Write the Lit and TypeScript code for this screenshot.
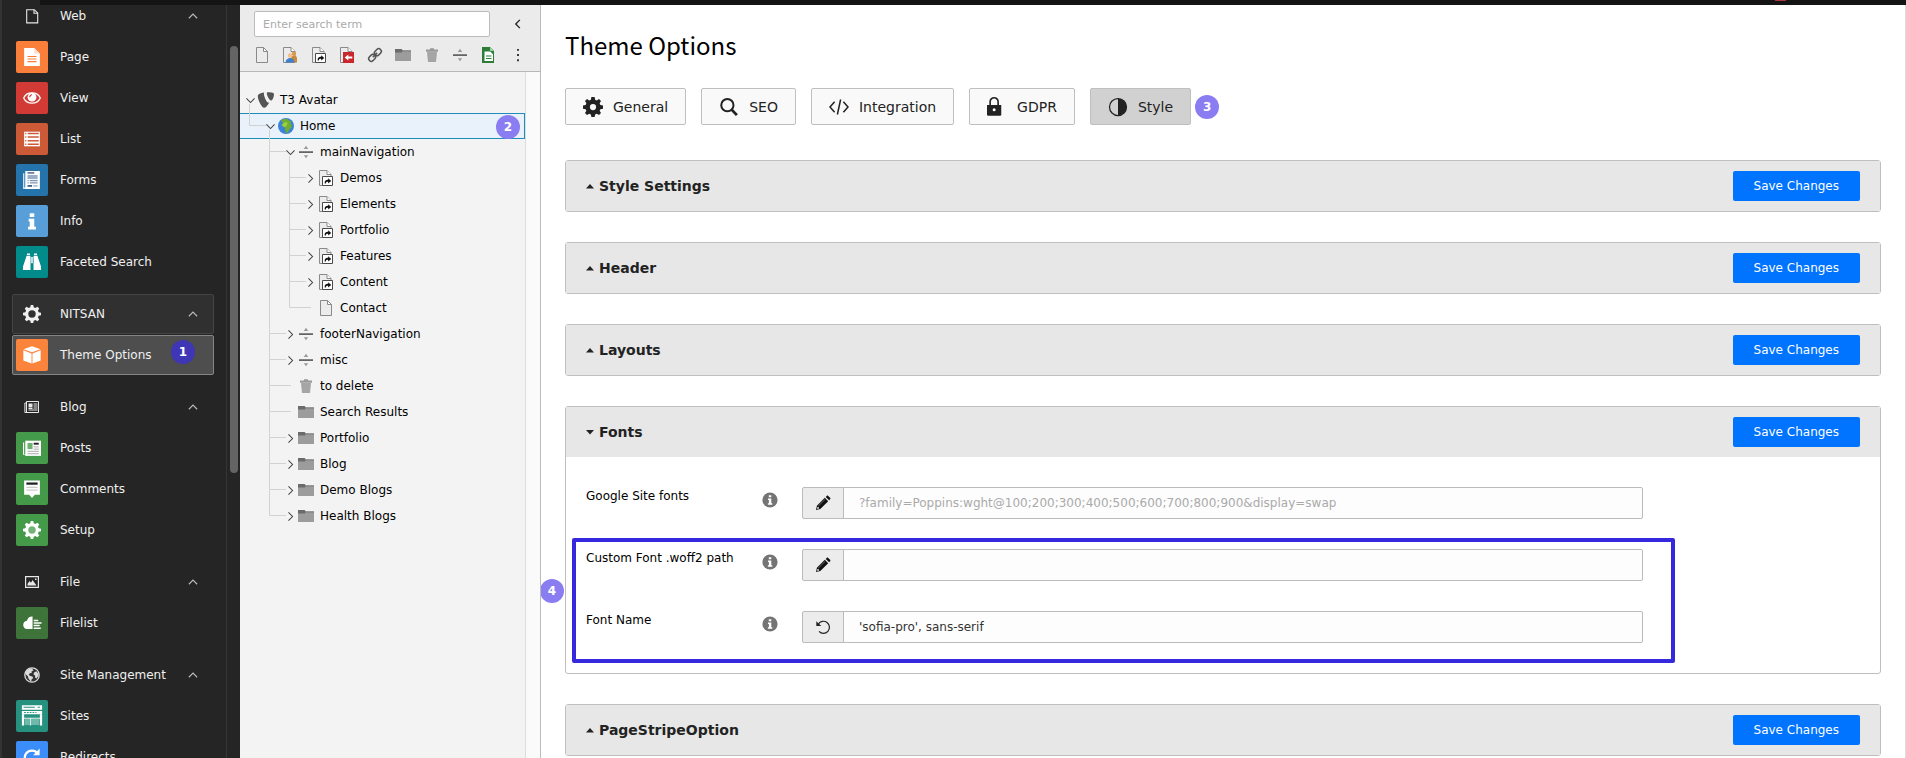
import { LitElement, html, svg, css, nothing } from "lit";
import { customElement, property } from "lit/decorators.js";
import { classMap } from "lit/directives/class-map.js";

/* ---------- icon shapes, all on a 16 x 16 grid ---------- */
const shapes: Record<string, unknown> = {
  // module menu, group heads
  webPage: svg`<path d="M2.700 1.700h7.600l3.400 3.400v9.800H2.700z" fill="none" stroke="#e8e8e8" stroke-width="1.100"/><path d="M10 1.700v3.600h3.700" fill="none" stroke="#e8e8e8" stroke-width="1.100"/>`,
  gear: svg`<path fill="currentColor" fill-rule="evenodd" d="M6.900 0h2.200l.4 2.100 1.500.6L12.800 1.600l1.600 1.600L13.300 5l.6 1.500 2.100.4v2.200l-2.100.4-.6 1.500 1.100 1.800-1.600 1.600-1.800-1.100-1.500.6L9.100 16H6.900l-.4-2.100-1.500-.6-1.800 1.100-1.600-1.600L2.700 11l-.6-1.500L0 9.100V6.900l2.100-.4L2.700 5 1.600 3.200l1.600-1.600L5 2.700l1.500-.6zM8 4.700a3.300 3.300 0 1 0 0 6.600 3.300 3.300 0 0 0 0-6.600z"/>`,
  gearSolid: svg`<path fill="currentColor" fill-rule="evenodd" d="M6.700 0h2.600l.4 2.100 1.300.6L12.800 1.600l1.600 1.600L13.300 5l.6 1.300 2.100.4v2.600l-2.100.4-.6 1.300 1.100 1.800-1.600 1.600-1.800-1.100-1.300.6L9.300 16H6.700l-.4-2.100-1.300-.6-1.800 1.100-1.600-1.600L2.700 11l-.6-1.300L0 9.300V6.700l2.100-.4L2.700 5 1.600 3.200l1.600-1.600L5 2.700l1.300-.6zM8 5.500a2.500 2.500 0 1 0 0 5 2.500 2.500 0 0 0 0-5z"/>`,
  gearGreen: svg`<circle cx="8" cy="8" r="4" fill="#74b378"/><path fill="#fff" fill-rule="evenodd" d="M6.900 0h2.200l.4 2.100 1.500.6L12.800 1.600l1.600 1.600L13.300 5l.6 1.500 2.100.4v2.200l-2.100.4-.6 1.500 1.100 1.800-1.600 1.600-1.800-1.100-1.500.6L9.100 16H6.900l-.4-2.100-1.500-.6-1.800 1.100-1.600-1.600L2.700 11l-.6-1.500L0 9.100V6.900l2.100-.4L2.700 5 1.600 3.200l1.600-1.600L5 2.700l1.500-.6zM8 4.700a3.300 3.300 0 1 0 0 6.600 3.300 3.300 0 0 0 0-6.600z"/>`,
  news: svg`<path d="M2.500 2.500h12v11h-12zM2.500 4H.9v9.500h2" fill="none" stroke="#e8e8e8"/><path d="M4.500 4.500h4v4h-4z" fill="#e8e8e8"/><path d="M9.500 5h4M9.500 7h4M9.500 9h4M4.500 11h9M4.500 9.500h4" stroke="#e8e8e8" fill="none"/>`,
  image: svg`<path d="M1.600 2.600h12.800v10.800H1.600z" fill="none" stroke="#e8e8e8" stroke-width="1.200"/><path d="M3.500 11.500V10L5.500 7l1.500 1.800L8.500 6l4 5.500z" fill="#e8e8e8"/><path d="M11 4.500h1.500V6H11z" fill="#e8e8e8"/>`,
  globeMono: svg`<circle cx="8" cy="8" r="7.200" fill="#333" stroke="#dcdcdc" stroke-width="1.300"/><path d="M2 4.500C3.500 2 6 1.200 8 1.500l1.500 1.700-2 1.300.2 1.500-2 .3-1 1.700 1.700 1 2 .6.8 1.500-1.600 1.500L7 15l-2.500-3.500L3.700 9 1.800 7.500zM10 5.500l2.500-1.300 2 2.800-.2 2-1.800 2.500-1.300-.7-.2-2.300-1.500-1z" fill="#dcdcdc"/>`,
  // module menu, entries
  doc: svg`<path d="M1 0h9l5 5v11H1z" fill="#fff"/><path d="M10 0v5h5z" fill="#fde0cf"/><path d="M4 7.500h8M4 9.800h8M4 12.100h8" stroke="#fa7f3b"/>`,
  eye: svg`<path d="M.6 8C2 5 4.800 3.500 8 3.500S14 5 15.400 8C14 11 11.200 12.600 8 12.600S2 11 .6 8z" fill="none" stroke="#fff" stroke-width="1.200"/><circle cx="8" cy="7.300" r="3.900" fill="#fff"/><path d="M6 7.300A2.200 2.200 0 0 1 8 5.100" stroke="#d13a35" fill="none"/>`,
  list: svg`<path d="M1 1.500h14v13H1z" fill="#fff"/><path d="M2 3.100h1M2 6.300h1M2 9.500h1M2 12.700h1M4.200 3.100H14M4.200 6.300H14M4.200 9.500H14M4.200 12.700H14" stroke="#cc5a37" stroke-width="1.300"/>`,
  form: svg`<path d="M0 2h1.200v12.500H3V16H0z" fill="#cfe1f2"/><path d="M2 0h13v16H2z" fill="#fff"/><path d="M4 1.700h6" stroke="#39557c" stroke-width="1.200"/><path d="M4 3.500h9v3.700H4z" fill="#9aaec8"/><path d="M4 8.500h1M6 8.500h7M4 10.500h1M6 10.500h7" stroke="#7d95b5"/><path d="M4 12.500h4V14H4z" fill="#39557c"/><path d="M9 12.500h4V14H9z" fill="#aebfd4"/>`,
  info: svg`<path d="M6 1h4v3.500H6zM5 6h5v7h1.500v2.500h-7V13H6V8.500H5z" fill="#fff"/>`,
  binoculars: svg`<path d="M3.200 2.500h3.300l.5 3.500v9H0v-3zM12.800 2.500H9.500L9 6v9h7v-3zM3.500.5h2.700v1.300H3.500zM9.800.5h2.700v1.300H9.800zM6.700 3.500h2.600V9H6.700z" fill="#fff"/><path d="M7 3.500v11.500M9 3.500v11.500" stroke="#028b8b" stroke-width=".6"/>`,
  cube: svg`<path d="M8 .3 15.500 2.800 8 5.600.5 2.800z" fill="#fff"/><path d="M.3 3.800 7.600 6.600v9L.3 12.800zM15.700 3.800 8.400 6.600v9l7.300-2.800z" fill="#fff"/>`,
  posts: svg`<path d="M0 3h1v10.500h2V14H0z" fill="#fff"/><path d="M2 1.500h14V15H2z" fill="#fff"/><path d="M4 3.500h4.500V9H4z" fill="#6db270"/><path d="M9.500 4.200H14" stroke="#222" stroke-width="1.700"/><path d="M9.500 7H14M9.500 9H14M4 11h10M4 13h10" stroke="#bbb"/>`,
  comment: svg`<path d="M1 .5h14v12.500h-4.500L8 16l-2.500-3H1z" fill="#fff"/><path d="M3 3.200h10" stroke="#222" stroke-width="2"/><path d="M3 6.500h10M3 9h10" stroke="#ccc"/>`,
  cloud: svg`<path d="M8.500 2.200C5.500 2 4 3.800 3.500 6 1.300 6.400 0 8 .2 10c.2 2 1.500 3.300 3.300 3.300h5zM9.500 2.500v10.800h6.300v-1.400H9.500v-1h5.300V9.600H9.500v-.9h7V7.400h-7v-.9h4V5.200h-4z" fill="#fff"/>`,
  site: svg`<path d="M-1-1.500h18v4H-1zM-1 3.500h18v3H-1z" fill="#fff"/><path d="M.5.300h10M13 .3h2" stroke="#26917f" stroke-width=".9"/><path d="M1 4.900h11" stroke="#26917f" stroke-dasharray="1.500 1"/><path d="M-1 6.500H1v10h-2zM15 6.500h2v10h-2zM1 9.500h14v1H1zM6 10.500h1v6H6z" fill="#fff"/><path d="M1.500 10.500H6v5.500H1.500zM7 10.500h7.500v5.500H7z" fill="#6fb8ac"/>`,
  redirect: svg`<path d="M13 4.800A6.300 6.300 0 1 0 14.200 9" fill="none" stroke="#fff" stroke-width="2"/><path d="M14.800.5v6H9z" fill="#fff"/>`,
  // page tree and its toolbar
  page: svg`<path d="M2.500.5h7l4 4v11h-11z" fill="#ececec" stroke="#8a8a8a"/><path d="M9.500.5v4h4z" fill="#fff" stroke="#8a8a8a" stroke-linejoin="round"/>`,
  pageUser: svg`<path d="M1.500.5h7.500l4 4v11H1.500z" fill="#ececec" stroke="#8a8a8a"/><path d="M9 .5v4h4" fill="#fff" stroke="#8a8a8a"/><circle cx="12" cy="6.800" r="2.200" fill="#d99a4e"/><path d="M9 15.500V11c0-3 6-3 6 0v4.500z" fill="#c98a3c"/><circle cx="8" cy="8.500" r="2.200" fill="#f0c08a"/><path d="M3.500 15.500c.3-6 8.700-6 9 0z" fill="#3f7fd0"/>`,
  pageShortcut: svg`<path d="M1.500.5h7.500l4 4v11H1.500z" fill="#ececec" stroke="#8a8a8a"/><path d="M9 .5v4h4" fill="#fff" stroke="#8a8a8a"/><path d="M4.500 6.500h10v9h-10z" fill="#fff" stroke="#4a4a4a"/><path d="M6.700 13.600c-.4-3 1.300-4 3.500-3.800V8.300l3 2.600-3 2.600v-1.600c-1.500-.2-2.500.2-2.300 1.700z" fill="#111"/>`,
  pageMount: svg`<path d="M1.500.5h7.500l4 4v11H1.500z" fill="#ececec" stroke="#8a8a8a"/><path d="M9 .5v4h4" fill="#fff" stroke="#8a8a8a"/><path d="M4 5h11v11H4z" fill="#c9272c"/><path d="M9.300 7.500v2h4v2h-4v2l-3.600-3z" fill="#fff"/>`,
  link: svg`<g fill="none" stroke="#555" stroke-width="1.500" transform="rotate(-45 8 8)"><rect x=".2" y="5.400" width="7.600" height="5.200" rx="2.600"/><rect x="8.200" y="5.400" width="7.600" height="5.200" rx="2.600"/><path d="M5 8h6"/></g>`,
  folder: svg`<path d="M0 2h6.500l1.500 1.500h8V14H0z" fill="#9c9c9c"/><path d="M0 2h6.500l1.200 1.500L7 5.500H0z" fill="#6b6b6b"/><path d="M7.500 3.500H16v.8H7.500z" fill="#6b6b6b"/>`,
  trash: svg`<path d="M3 5h10l-1 10H4z" fill="#a5a5a5"/><path d="M2 2.500h4V1.200h4v1.300h4v2.200H2z" fill="#999"/>`,
  divider: svg`<path d="M1 7.300h14v1.600H1z" fill="#555"/><path d="M8 1.800 10.200 5H5.800zM8 14.300 5.800 11.200h4.400z" fill="#999"/>`,
  green: svg`<path d="M2 0h8l4 4v12H2z" fill="#2b7d38"/><path d="M10 0v4h4z" fill="#9fcfa6"/><path d="M4.500 4.500h5.700l2.800 2.800V14H4.500z" fill="#fff"/><path d="M6 9h5.500M6 11.500h5.500" stroke="#2b7d38" stroke-width="1.200"/>`,
  typo3: svg`<path d="M11.200 10.700c-.2.100-.4.100-.6.100-2 0-4.700-6.700-4.700-8.900 0-.8.200-1.100.4-1.300C3.900.9 1 1.800.1 2.900c-.2.300-.3.700-.3 1.300 0 3.500 3.800 11.500 6.400 11.500 1.300 0 3.300-2 5-5zM10 .3c2.400 0 6 .4 6 1.700 0 3.400-1.700 6.600-2.900 6.600-1.700 0-4.300-5.200-4.300-7 0-.9.400-1.300 1.200-1.300z" fill="#555"/>`,
  earth: svg`<circle cx="8" cy="8" r="8" fill="#3b83d8"/><path d="M3 3c2-2.200 4.500-2.500 6-2l2 1.500 2.300 1-1 2 1.700 1.500-1 3.200-2 1.300-.5 2.500L8 15l-1-3.500.5-2L5 9 3.500 7l2-2z" fill="#6fae2e"/><path d="M3.500 7 7 4l3 1-2.500 4.500z" fill="#9bcf45"/>`,
  // option tabs
  search: svg`<circle cx="6.700" cy="6.500" r="4.900" fill="none" stroke="#222" stroke-width="1.600"/><path d="m10.300 10.300 4 4.200" stroke="#222" stroke-width="2.300"/>`,
  code: svg`<path d="M4.500 3.800.8 8l3.700 4.200M11.500 3.800 15.200 8l-3.700 4.200M9.300 2 6.700 14" fill="none" stroke="#222" stroke-width="1.200"/>`,
  lock: svg`<path d="M0 6.300h11.400v7.600a1 1 0 0 1-1 1H1a1 1 0 0 1-1-1z" fill="#222"/><path d="M2.500 6.500V3.800a3.200 3.200 0 0 1 6.400 0v2.700" fill="none" stroke="#222" stroke-width="1.300"/><circle cx="5.700" cy="10.200" r="1.200" fill="#fff"/>`,
  contrast: svg`<circle cx="8" cy="8" r="6.800" fill="none" stroke="#222" stroke-width="1"/><path d="M8 1.200a6.800 6.800 0 0 1 0 13.600z" fill="#222"/>`,
  // form
  infoDot: svg`<circle cx="8" cy="8" r="7.600" fill="#747474"/><path d="M6.800 3.300h2.500v2H6.800zM6 6.500h3.300v4.700h1v1.500H5.900v-1.500h1V8H6z" fill="#fff"/>`,
  pencil: svg`<path d="m1 15 .9-4.300L9.800 2.800l3.400 3.400-7.900 7.900zM10.700 1.900l1-1c.5-.5 1-.5 1.500 0l1.900 1.900c.5.500.5 1 0 1.500l-1 1z" fill="#111"/><path d="M3.200 11.200 10 4.400" stroke="#888" stroke-width=".7"/><circle cx="3" cy="13" r=".9" fill="#eee"/>`,
  undo: svg`<path d="M3.300 5.200A6 6 0 1 1 4 12.300" fill="none" stroke="#222" stroke-width="1.200"/><path d="M1.300 2.200V7h5z" fill="#222"/>`,
  up: svg`<path d="M2.500 11 8 5.500l5.500 5.500" fill="none" stroke="currentColor" stroke-width="1.500"/>`,
  down: svg`<path d="M3 5.500 8 10.500l5-5" fill="none" stroke="#444" stroke-width="1.300"/>`,
  right: svg`<path d="m5.500 3 5 5-5 5" fill="none" stroke="#444" stroke-width="1.300"/>`,
  left: svg`<path d="M10.500 2.500 5 8l5.500 5.500" fill="none" stroke="#222" stroke-width="1.800"/>`,
  dots: svg`<path d="M7 1h2v2.200H7zM7 6.900h2v2.200H7zM7 12.800h2V15H7z" fill="#222"/>`,
};

const icon = (name: string, size = 16) =>
  html`<svg class="icon" width=${size} height=${size} viewBox="0 0 16 16" aria-hidden="true">${shapes[name]}</svg>`;

const shared = css`
  * { box-sizing: border-box; }
  .icon { display: block; flex: none; overflow: visible; }
  button, input { font: inherit; color: inherit; margin: 0; }
  button { cursor: pointer; }
  .badge {
    width: 24px; height: 24px; border-radius: 50%;
    display: grid; place-items: center;
    background: #8a7df2; color: #fff;
    font: bold 12px/24px "DejaVu Sans", Verdana, sans-serif;
  }
`;

/* ---------- module menu ---------- */
interface Entry { label: string; icon: string; color: string; active?: boolean; badge?: string }
interface Group { label: string; icon: string; boxed?: boolean; entries: Entry[] }

const groups: Group[] = [
  { label: "Web", icon: "webPage", entries: [
    { label: "Page", icon: "doc", color: "#fa7f3b" },
    { label: "View", icon: "eye", color: "#d13a35" },
    { label: "List", icon: "list", color: "#cc5a37" },
    { label: "Forms", icon: "form", color: "#2474ab" },
    { label: "Info", icon: "info", color: "#589fd9" },
    { label: "Faceted Search", icon: "binoculars", color: "#028b8b" },
  ] },
  { label: "NITSAN", icon: "gear", boxed: true, entries: [
    { label: "Theme Options", icon: "cube", color: "#fb843c", active: true, badge: "1" },
  ] },
  { label: "Blog", icon: "news", entries: [
    { label: "Posts", icon: "posts", color: "#459a49" },
    { label: "Comments", icon: "comment", color: "#459a49" },
    { label: "Setup", icon: "gearGreen", color: "#459a49" },
  ] },
  { label: "File", icon: "image", entries: [
    { label: "Filelist", icon: "cloud", color: "#3e7339" },
  ] },
  { label: "Site Management", icon: "globeMono", entries: [
    { label: "Sites", icon: "site", color: "#26917f" },
    { label: "Redirects", icon: "redirect", color: "#3b8efa" },
  ] },
];

@customElement("module-menu")
export class ModuleMenu extends LitElement {
  static styles = [shared, css`
    :host {
      display: grid; grid-template-columns: minmax(0, 1fr) 14px;
      background: #252525; color: #f0f0f0; border-left: 2px solid #333;
      overflow: hidden; min-height: 0;
      font: 12px/16px "DejaVu Sans", Verdana, sans-serif;
    }
    .list { margin: -4px 0 0; padding: 0 12px 0 10px; min-height: 0; }
    .group { display: flex; flex-direction: column; gap: 1px; margin-bottom: 12px; }
    .row {
      position: relative; display: flex; align-items: center; gap: 12px;
      height: 40px; flex: none; padding: 0 14px 0 3px; width: 100%;
      border: 1px solid transparent; border-radius: 2px;
      background: none; color: inherit; text-decoration: none; text-align: left;
    }
    .row.boxed { background: #303030; border-color: #444; }
    .row.active { background: #4e4e4e; border-color: #858585; }
    .tile { width: 32px; height: 32px; flex: none; display: grid; place-items: center; border-radius: 2px; }
    .label { flex: 1; white-space: nowrap; }
    .caret { color: #bbb; }
    .row .badge { position: absolute; right: 18px; top: 4px; background: #3f36b5; }
    .track { border-left: 1px solid #363636; padding: 46px 3px 0; }
    .thumb { height: 427px; max-height: 60vh; width: 8px; border-radius: 4px; background: #646464; }
  `];
  render() {
    return html`
      <nav class="list" aria-label="Modules">
        ${groups.map((g) => html`
          <div class="group">
            <button class=${classMap({ row: true, boxed: !!g.boxed })} aria-expanded="true">
              <span class="tile">${icon(g.icon, g.icon === "gear" ? 18 : 16)}</span>
              <span class="label">${g.label}</span>
              <span class="caret">${icon("up", 12)}</span>
            </button>
            ${g.entries.map((e) => html`
              <a class=${classMap({ row: true, active: !!e.active })} href="#">
                <span class="tile" style="background:${e.color}">${icon(e.icon, 18)}</span>
                <span class="label">${e.label}</span>
                ${e.badge ? html`<span class="badge">${e.badge}</span>` : nothing}
              </a>`)}
          </div>`)}
      </nav>
      <div class="track"><div class="thumb"></div></div>`;
  }
}

/* ---------- page tree ---------- */
interface TreeNode { label: string; level: number; icon: string; state?: "open" | "closed"; selected?: boolean; badge?: string }

const nodes: TreeNode[] = [
  { label: "T3 Avatar", level: 0, icon: "typo3", state: "open" },
  { label: "Home", level: 1, icon: "earth", state: "open", selected: true, badge: "2" },
  { label: "mainNavigation", level: 2, icon: "divider", state: "open" },
  { label: "Demos", level: 3, icon: "pageShortcut", state: "closed" },
  { label: "Elements", level: 3, icon: "pageShortcut", state: "closed" },
  { label: "Portfolio", level: 3, icon: "pageShortcut", state: "closed" },
  { label: "Features", level: 3, icon: "pageShortcut", state: "closed" },
  { label: "Content", level: 3, icon: "pageShortcut", state: "closed" },
  { label: "Contact", level: 3, icon: "page" },
  { label: "footerNavigation", level: 2, icon: "divider", state: "closed" },
  { label: "misc", level: 2, icon: "divider", state: "closed" },
  { label: "to delete", level: 2, icon: "trash" },
  { label: "Search Results", level: 2, icon: "folder" },
  { label: "Portfolio", level: 2, icon: "folder", state: "closed" },
  { label: "Blog", level: 2, icon: "folder", state: "closed" },
  { label: "Demo Blogs", level: 2, icon: "folder", state: "closed" },
  { label: "Health Blogs", level: 2, icon: "folder", state: "closed" },
];

const tools: [string, string][] = [
  ["page", "Standard page"], ["pageUser", "Backend user section"], ["pageShortcut", "Shortcut"],
  ["pageMount", "Mount point"], ["link", "External link"], ["folder", "Folder"],
  ["trash", "Recycler"], ["divider", "Menu separator"], ["green", "Blog page"],
];

/* true when another node of this level follows below before the branch ends */
const continues = (index: number, level: number) => {
  for (let i = index + 1; i < nodes.length; i++) {
    if (nodes[i].level < level) return false;
    if (nodes[i].level === level) return true;
  }
  return false;
};

@customElement("page-tree")
export class PageTree extends LitElement {
  static styles = [shared, css`
    :host {
      display: flex; flex-direction: column; min-height: 0; overflow: hidden;
      background: #f3f3f3; color: #000; border-right: 1px solid #bbb;
      font: 12px/16px "DejaVu Sans", Verdana, sans-serif;
    }
    .head { background: #ebebeb; border-bottom: 1px solid #b8b8b8; padding: 6px 14px 7px; display: grid; gap: 9px; }
    .line { display: grid; grid-template-columns: minmax(0, 1fr) 16px; align-items: center; gap: 20px; }
    .line.bar { gap: 14px; }
    .search {
      width: 100%; height: 26px; padding: 0 8px; border: 1px solid #bbb; border-radius: 2px;
      background: #fff; font-size: 11px; min-width: 0;
    }
    .search::placeholder { color: #aaa; opacity: 1; }
    .tools { display: flex; justify-content: space-between; }
    .ghost { border: 0; background: none; padding: 0; width: 16px; height: 18px; display: grid; place-items: center; }
    .body { flex: 1; min-height: 0; display: grid; grid-template-columns: minmax(0, 1fr) 15px; }
    .tree { padding-top: 15px; }
    .gutter { background: #fafafa; border-left: 1px solid #ddd; }
    .node { position: relative; display: flex; align-items: center; height: 26px; white-space: nowrap; border: 1px solid transparent; border-width: 1px 0; }
    .node.selected { background: #e9f1fa; border: 1px solid #1f8dbb; border-left-width: 0; }
    .guides { flex: none; display: block; overflow: visible; }
    .guides path { fill: none; stroke: #d2d2d2; }
    .twist { width: 16px; flex: none; display: grid; place-items: center; }
    .name { margin-left: 6px; color: #000; text-decoration: none; }
    .node .badge { position: absolute; right: 4px; top: 1px; }
  `];
  private guides(n: TreeNode, i: number) {
    let d = "";
    for (let l = 1; l < n.level; l++) {
      if (continues(i, l)) d += `M${l * 20 - 10.5} 0V26`;
    }
    if (n.level > 0) {
      const x = n.level * 20 - 10.5;
      d += `M${x} 0V${continues(i, n.level) ? 26 : 12.5}M${x} 12.5H${n.level * 20 + (n.state ? 6 : 11)}`;
    }
    if (n.state === "open") d += `M${n.level * 20 + 9.5} 17V26`;
    return html`<svg class="guides" width=${2 + n.level * 20} height="26" aria-hidden="true">${svg`<path d=${d}></path>`}</svg>`;
  }
  render() {
    return html`
      <div class="head">
        <div class="line">
          <input class="search" type="text" placeholder="Enter search term" aria-label="Enter search term">
          <button class="ghost" aria-label="Collapse">${icon("left", 12)}</button>
        </div>
        <div class="line bar">
          <div class="tools">
            ${tools.map(([name, label]) => html`<button class="ghost" aria-label=${label}>${icon(name)}</button>`)}
          </div>
          <button class="ghost" aria-label="More">${icon("dots", 14)}</button>
        </div>
      </div>
      <div class="body">
        <div class="tree" role="tree">
          ${nodes.map((n, i) => html`
            <div class=${classMap({ node: true, selected: !!n.selected })} role="treeitem" aria-level=${n.level + 1}>
              ${this.guides(n, i)}
              <span class="twist">${n.state ? icon(n.state === "open" ? "down" : "right", 13) : nothing}</span>
              ${icon(n.icon)}
              <a class="name" href="#">${n.label}</a>
              ${n.badge ? html`<span class="badge">${n.badge}</span>` : nothing}
            </div>`)}
        </div>
        <div class="gutter"></div>
      </div>`;
  }
}

/* ---------- collapsible option panel ---------- */
@customElement("option-panel")
export class OptionPanel extends LitElement {
  @property() heading = "";
  @property({ type: Boolean, reflect: true }) open = false;
  static styles = [shared, css`
    :host { display: block; border: 1px solid #bfbfbf; border-radius: 3px; background: #fff; }
    .bar { display: flex; align-items: center; justify-content: space-between; background: #e7e7e7; padding: 10px 20px; }
    .toggle {
      display: flex; align-items: center; gap: 5px; padding: 0; border: 0; background: none;
      color: #222; font: bold 14px/20px "DejaVu Sans", Verdana, sans-serif;
    }
    .save {
      height: 30px; padding: 0 21px; border: 0; border-radius: 2px;
      background: #0073ff; color: #fff; font: 12px/16px "DejaVu Sans", Verdana, sans-serif;
    }
    .content { padding: 30px 20px; }
  `];
  render() {
    return html`
      <div class="bar">
        <button class="toggle" aria-expanded=${this.open ? "true" : "false"}>
          <svg class="icon" width="8" height="8" viewBox="0 0 8 8" aria-hidden="true">
            ${this.open ? svg`<path d="M0 2h8L4 6.500z" fill="#222"/>` : svg`<path d="M0 6.500h8L4 2z" fill="#222"/>`}
          </svg>
          ${this.heading}
        </button>
        <button class="save">Save Changes</button>
      </div>
      ${this.open ? html`<div class="content"><slot></slot></div>` : nothing}`;
  }
}

/* ---------- page shell ---------- */
const tabs = [
  { label: "General", icon: "gearSolid" },
  { label: "SEO", icon: "search" },
  { label: "Integration", icon: "code" },
  { label: "GDPR", icon: "lock" },
  { label: "Style", icon: "contrast", active: true },
];

@customElement("app-root")
export class AppRoot extends LitElement {
  static styles = [shared, css`
    :host {
      display: grid; grid-template-columns: 240px 301px minmax(0, 1fr); grid-template-rows: minmax(0, 1fr);
      position: relative; height: 100vh; overflow: hidden; background: #fff;
      font: 12px/16px "DejaVu Sans", Verdana, sans-serif; color: #000;
    }
    .strip { position: absolute; z-index: 2; top: 0; left: 40px; right: 0; height: 5px; background: #141414; }
    .mark { position: absolute; right: 120px; top: 0; width: 11px; height: 1px; background: #a8383c; }
    page-tree, main { margin-top: 5px; }
    main { padding: 22px 24px 0; border-right: 1px solid #ddd; overflow: hidden; min-height: 0; }
    h1 { margin: 0; font: 400 24px/36px "Noto Sans CJK JP", "Noto Sans", sans-serif; }
    .tabs { display: flex; align-items: center; gap: 15px; margin: 25px 0 35px; }
    .tab {
      display: flex; align-items: center; gap: 10px; height: 37px; padding: 0 17px;
      border: 1px solid #bfbfbf; border-radius: 2px; background: #f9f9f9; color: #222;
      font-size: 14px; line-height: 20px;
    }
    .tab.active { background: #d1d1d1; }
    .tabs .badge { margin-left: -11px; }
    .panels { display: grid; gap: 30px; }
    .fields { display: grid; gap: 30px; width: 83%; }
    .field { display: grid; grid-template-columns: 176px 40px minmax(0, 1fr); align-items: start; }
    .field label { padding-top: 1px; white-space: nowrap; }
    .hint { border: 0; background: none; padding: 5px 0 0; width: 16px; }
    .group { display: flex; height: 32px; }
    .edit {
      width: 42px; flex: none; display: grid; place-items: center; padding: 0;
      background: #ececec; border: 1px solid #bbb; border-radius: 2px 0 0 2px;
    }
    .text {
      flex: 1; min-width: 0; margin-left: -1px; padding: 0 15px; background: #fdfdfd; color: #333;
      border: 1px solid #bbb; border-radius: 0 2px 2px 0;
    }
    .text::placeholder { color: #aaa; opacity: 1; }
    .marked { position: relative; display: grid; gap: 30px; }
    .frame { position: absolute; inset: -11px -32px -20px -14px; border: 4px solid #3628dc; border-radius: 2px; pointer-events: none; }
    .marked > .badge { position: absolute; left: -46px; top: 30px; }
  `];
  private field(id: string, label: string, glyph: string, value = "", placeholder = "") {
    return html`
      <div class="field">
        <label for=${id}>${label}</label>
        <button class="hint" aria-label="About ${label}">${icon("infoDot")}</button>
        <div class="group">
          <button class="edit" aria-label="Edit ${label}">${icon(glyph)}</button>
          <input class="text" id=${id} type="text" .value=${value} placeholder=${placeholder}>
        </div>
      </div>`;
  }
  render() {
    return html`
      <div class="strip"><div class="mark"></div></div>
      <module-menu></module-menu>
      <page-tree></page-tree>
      <main>
        <h1>Theme Options</h1>
        <div class="tabs">
          ${tabs.map((t) => html`
            <button class=${classMap({ tab: true, active: !!t.active })}>${icon(t.icon, 20)}${t.label}</button>`)}
          <span class="badge">3</span>
        </div>
        <div class="panels">
          <option-panel heading="Style Settings"></option-panel>
          <option-panel heading="Header"></option-panel>
          <option-panel heading="Layouts"></option-panel>
          <option-panel heading="Fonts" open>
            <div class="fields">
              ${this.field("google", "Google Site fonts", "pencil", "", "?family=Poppins:wght@100;200;300;400;500;600;700;800;900&display=swap")}
              <div class="marked">
                ${this.field("woff", "Custom Font .woff2 path", "pencil")}
                ${this.field("name", "Font Name", "undo", "'sofia-pro', sans-serif")}
                <div class="frame"></div>
                <span class="badge">4</span>
              </div>
            </div>
          </option-panel>
          <option-panel heading="PageStripeOption"></option-panel>
        </div>
      </main>`;
  }
}
